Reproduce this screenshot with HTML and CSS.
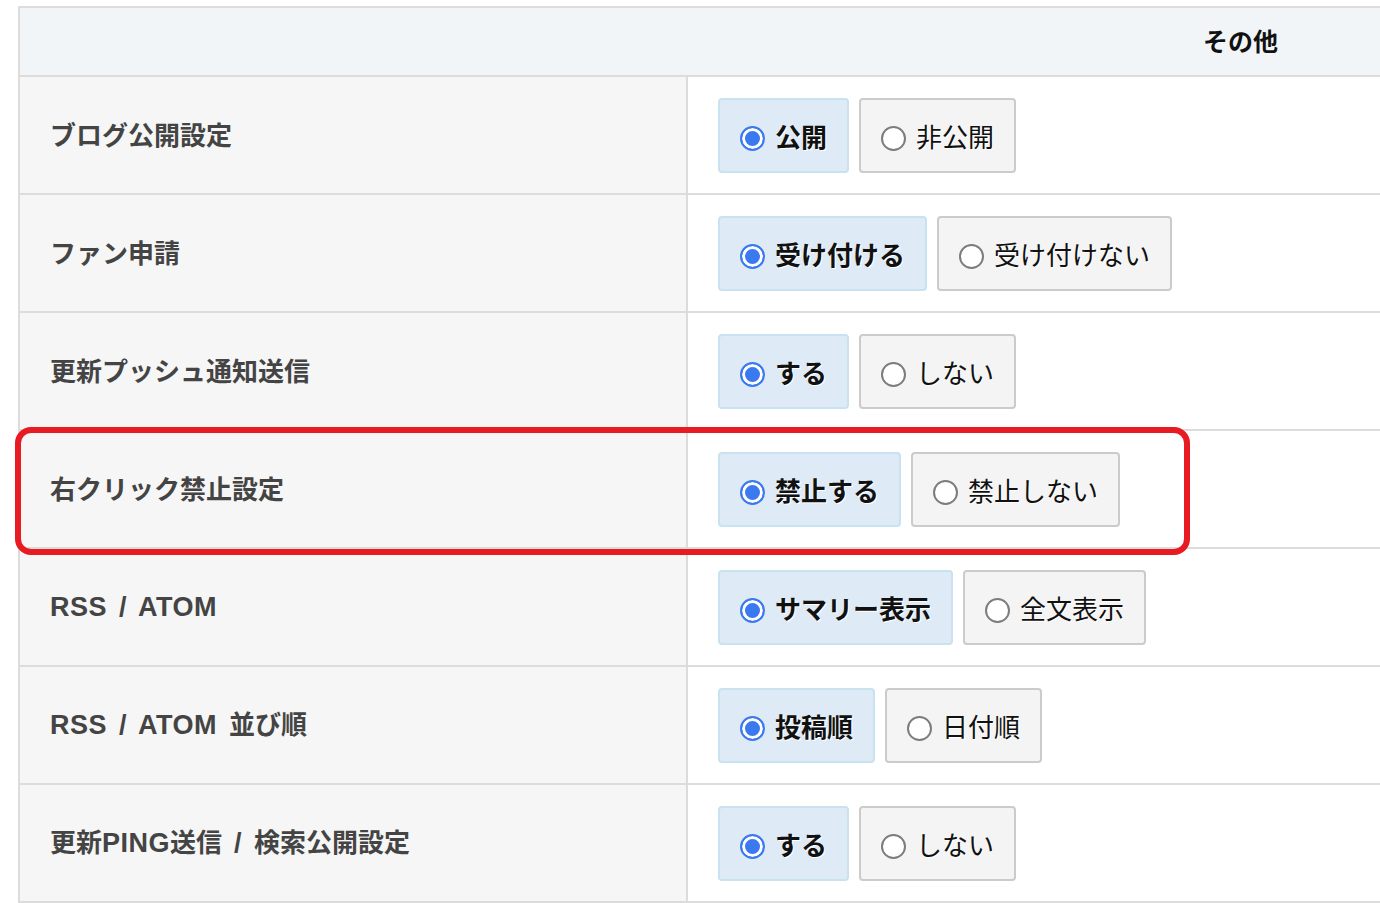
FILE: index.html
```html
<!DOCTYPE html>
<html lang="ja">
<head>
<meta charset="utf-8">
<title>その他</title>
<link rel="stylesheet" href="styles.css">
</head>
<body>
<div class="page">
  <table class="settings">
    <thead>
      <tr><th colspan="2" class="head">その他</th></tr>
    </thead>
    <tbody>
      <tr>
        <th class="label">ブログ公開設定</th>
        <td class="field"><div class="choices">
          <label class="opt on"><span class="radio"></span><span class="txt">公開</span></label>
          <label class="opt"><span class="radio"></span><span class="txt">非公開</span></label>
        </div></td>
      </tr>
      <tr>
        <th class="label">ファン申請</th>
        <td class="field"><div class="choices">
          <label class="opt on"><span class="radio"></span><span class="txt">受け付ける</span></label>
          <label class="opt"><span class="radio"></span><span class="txt">受け付けない</span></label>
        </div></td>
      </tr>
      <tr>
        <th class="label">更新プッシュ通知送信</th>
        <td class="field"><div class="choices">
          <label class="opt on"><span class="radio"></span><span class="txt">する</span></label>
          <label class="opt"><span class="radio"></span><span class="txt">しない</span></label>
        </div></td>
      </tr>
      <tr>
        <th class="label">右クリック禁止設定</th>
        <td class="field"><div class="choices">
          <label class="opt on"><span class="radio"></span><span class="txt">禁止する</span></label>
          <label class="opt"><span class="radio"></span><span class="txt">禁止しない</span></label>
        </div></td>
      </tr>
      <tr>
        <th class="label"><span class="lat">RSS / ATOM</span></th>
        <td class="field"><div class="choices">
          <label class="opt on"><span class="radio"></span><span class="txt">サマリー表示</span></label>
          <label class="opt"><span class="radio"></span><span class="txt">全文表示</span></label>
        </div></td>
      </tr>
      <tr>
        <th class="label"><span class="lat">RSS / ATOM </span>並び順</th>
        <td class="field"><div class="choices">
          <label class="opt on"><span class="radio"></span><span class="txt">投稿順</span></label>
          <label class="opt"><span class="radio"></span><span class="txt">日付順</span></label>
        </div></td>
      </tr>
      <tr>
        <th class="label">更新<span class="lat">PING</span>送信<span class="lat"> / </span>検索公開設定</th>
        <td class="field"><div class="choices">
          <label class="opt on"><span class="radio"></span><span class="txt">する</span></label>
          <label class="opt"><span class="radio"></span><span class="txt">しない</span></label>
        </div></td>
      </tr>
    </tbody>
  </table>
  <div class="highlight"></div>
</div>
</body>
</html>
```

FILE: styles.css
```css
html, body {
  margin: 0;
  padding: 0;
  background: #ffffff;
  overflow: hidden;
}

body {
  font-family: "Noto Sans CJK JP", "Liberation Sans", sans-serif;
  color: #111;
}

.page {
  position: relative;
  padding: 6px 0 0 18px;
  width: 1400px;
}

.settings {
  border-collapse: separate;
  border-spacing: 0;
  width: 1374px;
  border-top: 2px solid #dcdcdc;
  border-left: 2px solid #dcdcdc;
}

.head {
  background: #f1f5f8;
  height: 65px;
  padding: 0 114px 2px 0;
  text-align: right;
  font-size: 25px;
  font-weight: 700;
  color: #111;
  line-height: 35px;
  border-bottom: 2px solid #dcdcdc;
  vertical-align: middle;
}

.label {
  width: 636px;
  height: 113px;
  padding: 0 0 3px 30px;
  background: #f6f6f6;
  border-right: 2px solid #dcdcdc;
  border-bottom: 2px solid #dcdcdc;
  text-align: left;
  vertical-align: middle;
  font-size: 26px;
  font-weight: 700;
  color: #444;
  line-height: 34px;
  white-space: nowrap;
}

.lat {
  font-family: "Liberation Sans", sans-serif;
  font-size: 27px;
  letter-spacing: 0.5px;
  word-spacing: 4px;
  white-space: pre;
}

.field {
  padding: 0 0 0 30px;
  height: 116px;
  border-bottom: 2px solid #dcdcdc;
  vertical-align: middle;
  background: #fff;
}

.choices {
  display: flex;
  gap: 10px;
  align-items: center;
}

.opt {
  display: flex;
  align-items: center;
  gap: 10px;
  box-sizing: border-box;
  height: 75px;
  padding: 0 20px;
  border: 2px solid #cbcbcb;
  border-radius: 4px;
  background: #f4f4f4;
  font-size: 26px;
  line-height: 30px;
  color: #111;
  white-space: nowrap;
}

.opt.on {
  background: #deebf6;
  border-color: #c8e3ef;
  font-weight: 700;
}

.txt {
  text-shadow: 1px 1px 0 #fff;
  padding-top: 2px;
}

.radio {
  flex: none;
  box-sizing: border-box;
  width: 25px;
  height: 25px;
  border-radius: 50%;
  border: 2px solid #7c7c7c;
  background: #fff;
  margin-top: 6px;
}

.opt.on .radio {
  border-color: #3b79ee;
  background: #3b79ee;
  box-shadow: inset 0 0 0 3px #fff;
}

.highlight {
  position: absolute;
  left: 15px;
  top: 427px;
  width: 1175px;
  height: 128px;
  box-sizing: border-box;
  border: 6px solid #e81a22;
  border-radius: 16px;
  pointer-events: none;
}
```
